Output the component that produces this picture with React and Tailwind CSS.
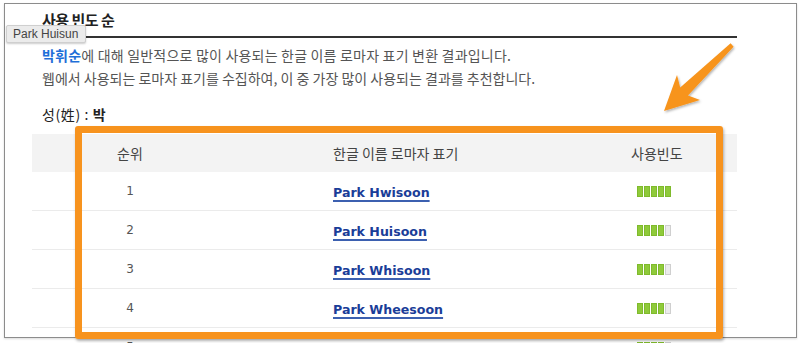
import React from "react";

const rows = [
  { rank: 1, name: "Park Hwisoon", level: 5 },
  { rank: 2, name: "Park Huisoon", level: 4 },
  { rank: 3, name: "Park Whisoon", level: 4 },
  { rank: 4, name: "Park Wheesoon", level: 4 },
  { rank: 5, name: "Park Huisun", level: 4 },
];

const kr = { fontFamily: '"Noto Sans CJK KR", "Noto Sans", sans-serif' };
const dv = { fontFamily: '"DejaVu Sans", Verdana, sans-serif' };

function Bar({ level }) {
  return (
    <div className="flex h-[11px] w-[34px] gap-px">
      {[0, 1, 2, 3, 4].map((i) =>
        i < level ? (
          <div
            key={i}
            className="h-[11px] w-[6px] bg-[#8fca3a] shadow-[inset_0_0_0_1px_#7fba2c]"
          />
        ) : (
          <div
            key={i}
            className="h-[11px] w-[6px] bg-[#ececec] shadow-[inset_0_0_0_1px_#cfcfcf]"
          />
        )
      )}
    </div>
  );
}

export default function App() {
  return (
    <div className="relative h-[343px] w-[800px] overflow-hidden bg-white">
      <div className="ml-[4px] mt-[3px] h-[335px] w-[793px] border border-[#8c8c8c] shadow-[0_1px_2px_rgba(0,0,0,0.15)]">
        <div className="ml-[27px] w-[705px]">
          <div
            className="ml-[8px] h-[34px] border-b-2 border-[#333] pl-[2px] text-[15px] font-bold leading-[32px] tracking-[-0.5px] text-[#222]"
            style={kr}
          >
            사용 빈도 순
          </div>
          <div
            className="ml-[10px] mt-[6px] text-[14px] leading-[23px] text-[#555]"
            style={kr}
          >
            <p className="tracking-[0.2px]">
              <span className="font-bold text-[#1f6fd8]">박휘순</span>에 대해
              일반적으로 많이 사용되는 한글 이름 로마자 표기 변환 결과입니다.
            </p>
            <p>
              웹에서 사용되는 로마자 표기를 수집하여, 이 중 가장 많이 사용되는
              결과를 추천합니다.
            </p>
          </div>
          <div
            className="ml-[10px] mt-[14px] text-[14px] leading-[20px] tracking-[0.6px] text-[#222]"
            style={kr}
          >
            성(姓) : <span className="font-bold">박</span>
          </div>
          <div className="mt-[10px]">
            <div
              className="grid h-[38px] grid-cols-[196px_349px_160px] items-center bg-[#f3f3f3] text-[14px] text-[#444]"
              style={kr}
            >
              <div className="text-center">순위</div>
              <div className="pl-[105px]">한글 이름 로마자 표기</div>
              <div className="pl-[54px]">사용빈도</div>
            </div>
            {rows.map((r) => (
              <div
                key={r.rank}
                className="grid h-[39px] grid-cols-[196px_349px_160px] items-center border-b border-[#ebebeb]"
              >
                <div className="text-center text-[12px] text-[#555]" style={dv}>
                  {r.rank}
                </div>
                <div className="pl-[105px]">
                  <a
                    href="#"
                    className="text-[12.6px] font-bold text-[#1a3d98] underline decoration-[#3c60b0] decoration-2 underline-offset-[3px]"
                    style={dv}
                  >
                    {r.name}
                  </a>
                </div>
                <div className="pl-[60px]">
                  <Bar level={r.level} />
                </div>
              </div>
            ))}
          </div>
        </div>
      </div>

      {/* Orange highlight box */}
      <div className="absolute left-[75px] top-[126px] h-[213px] w-[648px] rounded-[3px] border-[7px] border-[#f7931e] shadow-[1px_2px_3px_rgba(0,0,0,0.3)]" />

      {/* Orange arrow */}
      <svg
        className="absolute left-0 top-0"
        width="800"
        height="343"
        viewBox="0 0 800 343"
      >
        <defs>
          <filter id="sh" x="-20%" y="-20%" width="140%" height="140%">
            <feDropShadow dx="1" dy="1.5" stdDeviation="1" floodColor="#000" floodOpacity="0.3" />
          </filter>
        </defs>
        <polygon
          points="664,111 677,75 680.2,87.5 730.6,43.2 733.6,46.8 688,95.5 700,100"
          fill="#f7941d"
          strokeLinejoin="round"
          filter="url(#sh)"
        />
      </svg>

      {/* Tooltip */}
      <div
        className="absolute left-[6px] top-[25px] flex h-[18px] w-[80px] items-center rounded-[2px] border border-[#cfcfcf] bg-[#ebebeb] pl-[6px] text-[12px] text-[#444] shadow-[0_1px_2px_rgba(0,0,0,0.2)]"
        style={{ fontFamily: '"Liberation Sans", Arial, sans-serif' }}
      >
        Park Huisun
      </div>
    </div>
  );
}
